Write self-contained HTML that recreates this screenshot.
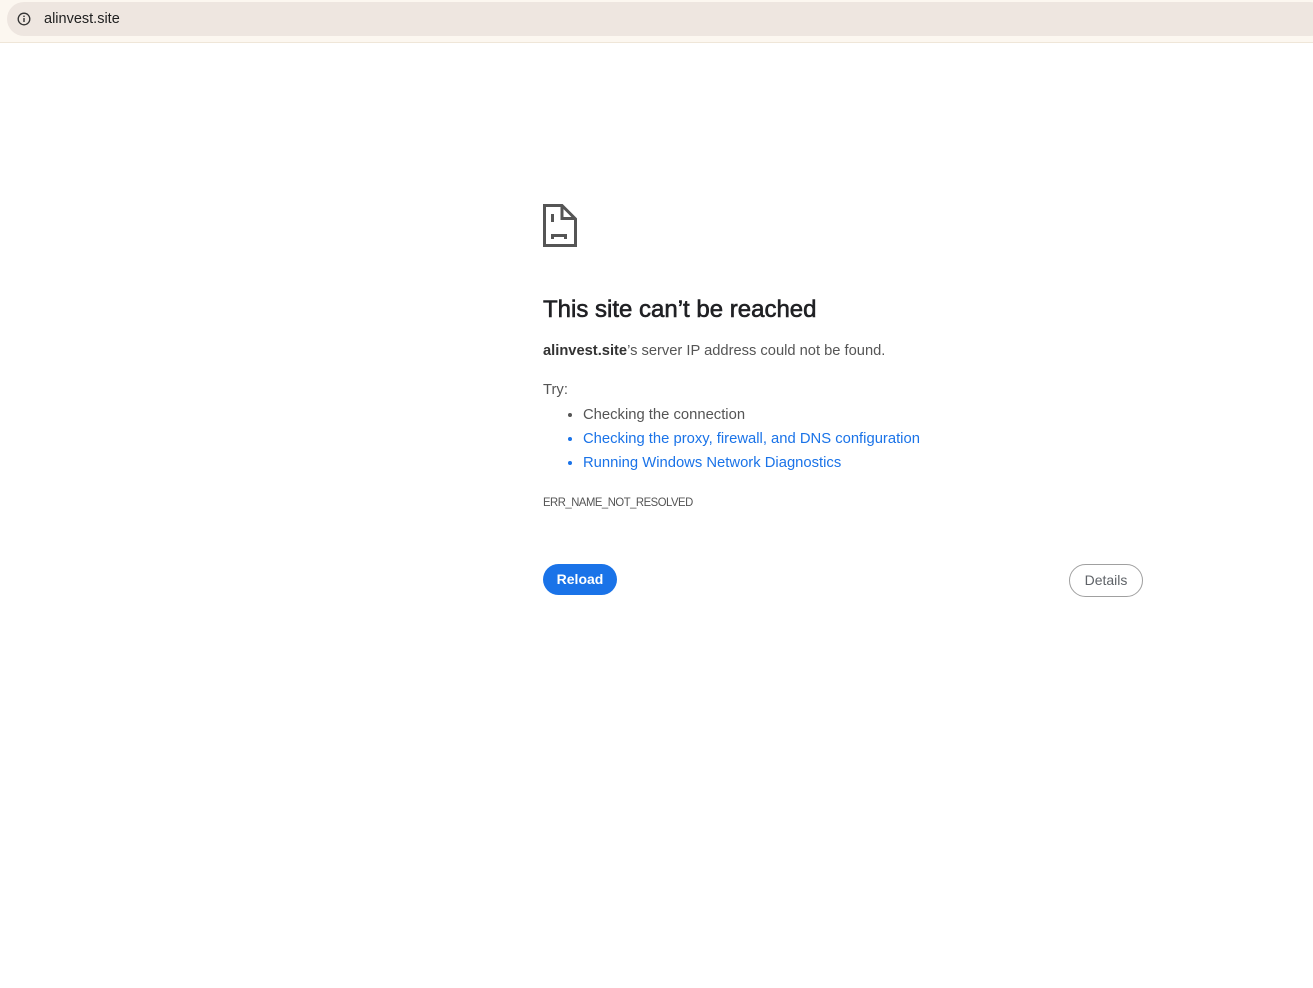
<!DOCTYPE html>
<html><head><meta charset="utf-8"><style>
*{margin:0;padding:0;box-sizing:border-box}
body{width:1313px;height:988px;background:#fff;font-family:"Liberation Sans",sans-serif;position:relative;overflow:hidden}
.bar{position:absolute;left:0;top:0;width:1313px;height:43px;background:#fcf7f0;border-bottom:1px solid #efe6d8}
.pill{position:absolute;left:7px;top:2px;width:1320px;height:34px;background:#eee6e0;border-radius:17px}
.ic{position:absolute;left:10px;top:10px;width:14px;height:14px}
.url{position:absolute;left:37px;top:9px;font-size:14.5px;color:#1f1f1f}
.t{position:absolute;left:543px;color:#555}
h1{position:absolute;left:543px;top:296px;font-size:24px;font-weight:normal;color:#202124;-webkit-text-stroke:0.6px #202124}
ul{position:absolute;left:583px;top:405px;list-style:disc;font-size:14.8px;color:#555}
ul li{height:24px;line-height:20px}
ul li.l{color:#1a73e8}
.reload{position:absolute;left:543px;top:564px;width:74px;height:31px;background:#1a73e8;color:#fff;border-radius:16px;font-size:14px;text-align:center;line-height:31px;font-weight:bold}
.det{position:absolute;left:1069px;top:564px;width:74px;height:33px;border:1px solid #a0a0a0;border-radius:17px;color:#5f6368;font-size:14px;text-align:center;line-height:31px}
</style></head><body>
<div class="bar"><div class="pill">
<svg class="ic" viewBox="0 0 14 14"><circle cx="7" cy="7" r="5.8" fill="none" stroke="#333" stroke-width="1.3"/><rect x="6.3" y="6" width="1.4" height="4" fill="#333"/><rect x="6.3" y="3.6" width="1.4" height="1.4" fill="#333"/></svg>
<div class="url">alinvest.site</div></div></div>
<svg style="position:absolute;left:543px;top:204px" width="34" height="43" viewBox="0 0 34 43">
<path d="M1.5 1.5H19L32.5 15V41.5H1.5Z" fill="none" stroke="#555" stroke-width="3"/>
<path d="M19 1.5V14.5H32" fill="none" stroke="#555" stroke-width="3"/>
<rect x="8" y="10" width="3" height="8" fill="#555"/>
<path d="M9.5 35V31.5H22.5V35" fill="none" stroke="#555" stroke-width="3"/>
</svg>
<h1>This site can’t be reached</h1>
<div class="t" style="top:343px;font-size:14.7px"><b style="color:#333">alinvest.site</b>’s server IP address could not be found.</div>
<div class="t" style="top:382px;font-size:14.8px">Try:</div>
<ul><li>Checking the connection</li><li class="l">Checking the proxy, firewall, and DNS configuration</li><li class="l">Running Windows Network Diagnostics</li></ul>
<div class="t" style="top:495px;font-size:12px;letter-spacing:-0.5px;transform:scaleX(0.94);transform-origin:left">ERR_NAME_NOT_RESOLVED</div>
<div class="reload">Reload</div>
<div class="det">Details</div>
</body></html>
